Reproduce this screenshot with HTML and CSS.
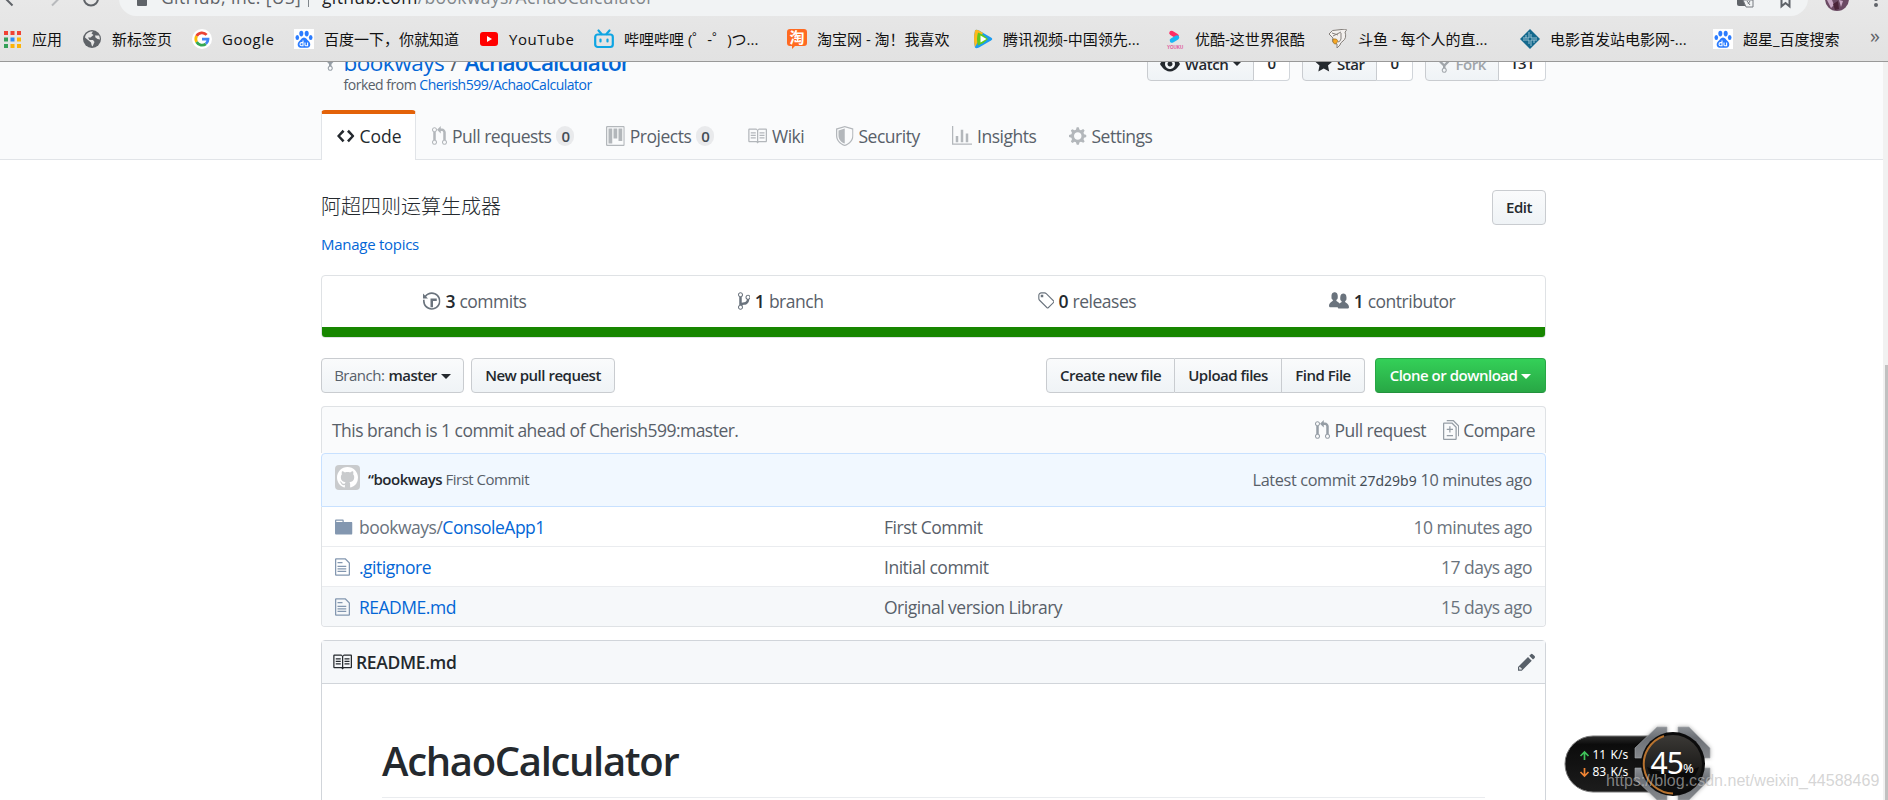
FILE: index.html
```html
<!doctype html>
<html lang="en">
<head>
    <meta charset="UTF-8">
    <title>bookways/AchaoCalculator</title>
    <link rel="stylesheet" href="styles.css">
</head>
<body>
    <!-- icons -->
    <svg class="defs">
        <symbol id="i-code" viewBox="0 0 14 16"><path d="M9.5 3L8 4.5 11.5 8 8 11.5 9.5 13 14 8 9.5 3zm-5 0L0 8l4.5 5L6 11.5 2.5 8 6 4.5 4.5 3z"/></symbol>
        <symbol id="i-pr" viewBox="0 0 12 16"><path d="M11 11.28V5c-.03-.78-.34-1.47-.94-2.06C9.46 2.35 8.78 2.03 8 2H7V0L4 3l3 3V4h1c.27.02.48.11.69.31.21.2.3.42.31.69v6.28A1.993 1.993 0 0 0 10 15a1.993 1.993 0 0 0 1-3.72zm-1 2.92c-.66 0-1.2-.55-1.2-1.2 0-.65.55-1.2 1.2-1.2.65 0 1.2.55 1.2 1.2 0 .65-.55 1.2-1.2 1.2zM4 3c0-1.11-.89-2-2-2a1.993 1.993 0 0 0-1 3.72v6.56A1.993 1.993 0 0 0 2 15a1.993 1.993 0 0 0 1-3.72V4.72c.59-.34 1-.98 1-1.72zm-.8 10c0 .66-.55 1.2-1.2 1.2-.65 0-1.2-.55-1.2-1.2 0-.65.55-1.2 1.2-1.2.65 0 1.2.55 1.2 1.2zM2 4.2C1.34 4.2.8 3.65.8 3c0-.65.55-1.2 1.2-1.2.65 0 1.2.55 1.2 1.2 0 .65-.55 1.2-1.2 1.2z"/></symbol>
        <symbol id="i-project" viewBox="0 0 15 16"><path fill-rule="evenodd" d="M10 12h3V2h-3v10zm-4-2h3V2H6v8zm-4 4h3V2H2v12zm-1 1h13V1H1v14zM14 0H1a1 1 0 0 0-1 1v14a1 1 0 0 0 1 1h13a1 1 0 0 0 1-1V1a1 1 0 0 0-1-1z"/></symbol>
        <symbol id="i-book" viewBox="0 0 16 16"><path d="M3 5h4v1H3V5zm0 3h4V7H3v1zm0 2h4V9H3v1zm11-5h-4v1h4V5zm0 2h-4v1h4V7zm0 2h-4v1h4V9zm2-6v9c0 .55-.45 1-1 1H9.5l-1 1-1-1H2c-.55 0-1-.45-1-1V3c0-.55.45-1 1-1h5.5l1 1 1-1H15c.55 0 1 .45 1 1zm-8 .5L7.5 3H2v9h6V3.5zm7-.5H9.5l-.5.5V12h6V3z"/></symbol>
        <symbol id="i-shield" viewBox="0 0 14 16"><path fill-rule="evenodd" d="M0 2l7-2 7 2v6.02C14 12.69 8.69 16 7 16c-1.69 0-7-3.31-7-7.98V2zm1 .75L7 1l6 1.75v5.268C13 12.104 8.449 15 7 15c-1.449 0-6-2.896-6-6.982V2.75zm1 .75L7 2v12c-1.207 0-5-2.482-5-5.985V3.5z"/></symbol>
        <symbol id="i-graph" viewBox="0 0 16 16"><path d="M16 14v1H0V0h1v14h15zM5 13H3V8h2v5zm4 0H7V3h2v10zm4 0h-2V6h2v7z"/></symbol>
        <symbol id="i-gear" viewBox="0 0 14 16"><path d="M14 8.77v-1.6l-1.94-.64-.45-1.09.88-1.84-1.13-1.13-1.81.91-1.09-.45-.69-1.92h-1.6l-.63 1.94-1.11.45-1.84-.88-1.13 1.13.91 1.81-.45 1.09L0 7.23v1.59l1.94.64.45 1.09-.88 1.84 1.13 1.13 1.81-.91 1.09.45.69 1.92h1.59l.63-1.94 1.11-.45 1.84.88 1.13-1.13-.92-1.81.47-1.09L14 8.75v.02zM7 11c-1.66 0-3-1.34-3-3s1.34-3 3-3 3 1.34 3 3-1.34 3-3 3z"/></symbol>
        <symbol id="i-history" viewBox="0 0 14 16"><path d="M8 13H6V6h5v2H8v5zM7 1C4.81 1 2.87 2.02 1.59 3.59L0 2v4h4L2.5 4.5C3.55 3.17 5.17 2.3 7 2.3c3.14 0 5.7 2.56 5.7 5.7s-2.56 5.7-5.7 5.7A5.71 5.71 0 0 1 1.3 8c0-.34.03-.67.09-1H.08C.03 7.33 0 7.66 0 8c0 3.86 3.14 7 7 7s7-3.14 7-7-3.14-7-7-7z"/></symbol>
        <symbol id="i-branch" viewBox="0 0 10 16"><path d="M10 5c0-1.11-.89-2-2-2a1.993 1.993 0 0 0-1 3.72v.3c-.02.52-.23.98-.63 1.38-.4.4-.86.61-1.38.63-.83.02-1.48.16-2 .45V4.72a1.993 1.993 0 0 0-1-3.72C.88 1 0 1.89 0 3a2 2 0 0 0 1 1.72v6.56c-.59.35-1 .99-1 1.72 0 1.11.89 2 2 2 1.11 0 2-.89 2-2 0-.53-.2-1-.53-1.36.09-.06.48-.41.59-.47.25-.11.56-.17.94-.17 1.05-.05 1.95-.45 2.75-1.25S8.95 7.77 9 6.73h-.02C9.59 6.37 10 5.73 10 5zM2 1.8c.66 0 1.2.55 1.2 1.2 0 .65-.55 1.2-1.2 1.2C1.35 4.2.8 3.65.8 3c0-.65.55-1.2 1.2-1.2zm0 12.41c-.66 0-1.2-.55-1.2-1.2 0-.65.55-1.2 1.2-1.2.65 0 1.2.55 1.2 1.2 0 .65-.55 1.2-1.2 1.2zm6-8c-.66 0-1.2-.55-1.2-1.2 0-.65.55-1.2 1.2-1.2.65 0 1.2.55 1.2 1.2 0 .65-.55 1.2-1.2 1.2z"/></symbol>
        <symbol id="i-tag" viewBox="0 0 14 16"><path d="M7.73 1.73C7.26 1.26 6.62 1 5.96 1H3.5C2.13 1 1 2.13 1 3.5v2.47c0 .66.27 1.3.73 1.77l6.06 6.06c.39.39 1.02.39 1.41 0l4.59-4.59a.996.996 0 0 0 0-1.41L7.73 1.73zM2.38 7.09c-.31-.3-.47-.7-.47-1.13V3.5c0-.88.72-1.59 1.59-1.59h2.47c.42 0 .83.16 1.13.47l6.14 6.13-4.73 4.73-6.13-6.15zM3.01 3h2v2H3V3h.01z"/></symbol>
        <symbol id="i-org" viewBox="0 0 16 16"><path d="M16 12.999c0 .439-.45 1-1 1H7.995c-.539 0-.994-.447-.995-.999H1c-.54 0-1-.561-1-1 0-2.634 3-4 3-4s.229-.409 0-1c-.841-.621-1.058-.59-1-3 .058-2.419 1.367-3 2.5-3s2.442.58 2.5 3c.058 2.41-.159 2.379-1 3-.229.59 0 1 0 1s1.549.711 2.42 2.088C9.196 9.369 10 8.999 10 8.999s.229-.409 0-1c-.841-.62-1.058-.59-1-3 .058-2.419 1.367-3 2.5-3s2.437.581 2.495 3c.059 2.41-.158 2.38-1 3-.229.59 0 1 0 1s3.005 1.366 3.005 4z"/></symbol>
        <symbol id="i-dir" viewBox="0 0 14 16"><path d="M13 4H7V3c0-.66-.31-1-1-1H1c-.55 0-1 .45-1 1v10c0 .55.45 1 1 1h12c.55 0 1-.45 1-1V5c0-.55-.45-1-1-1zM6 4H1V3h5v1z"/></symbol>
        <symbol id="i-file" viewBox="0 0 12 16"><path d="M6 5H2V4h4v1zM2 8h7V7H2v1zm0 2h7V9H2v1zm0 2h7v-1H2v1zm10-7.5V14c0 .55-.45 1-1 1H1c-.55 0-1-.45-1-1V2c0-.55.45-1 1-1h7.5L12 4.5zM11 5L8 2H1v12h10V5z"/></symbol>
        <symbol id="i-diff" viewBox="0 0 13 16"><path d="M6 7h2v1H6v2H5V8H3V7h2V5h1v2zm-3 6h5v-1H3v1zM7.5 2L11 5.5V15c0 .55-.45 1-1 1H1c-.55 0-1-.45-1-1V3c0-.55.45-1 1-1h6.5zM10 6L7 3H1v12h9V6zM8.5 0H3v1h5l4 4v8h1V4.5L8.5 0z"/></symbol>
        <symbol id="i-pencil" viewBox="0 0 14 16"><path d="M0 12v3h3l8-8-3-3-8 8zm3 2H1v-2h1v1h1v1zm10.3-9.3L12 6 9 3l1.3-1.3a.996.996 0 0 1 1.41 0l1.59 1.59c.39.39.39 1.02 0 1.41z"/></symbol>
        <symbol id="i-eye" viewBox="0 0 16 16"><path d="M8.06 2C3 2 0 8 0 8s3 6 8.06 6C13 14 16 8 16 8s-3-6-7.94-6zM8 12c-2.2 0-4-1.78-4-4 0-2.2 1.8-4 4-4 2.22 0 4 1.8 4 4 0 2.22-1.78 4-4 4zm2-4c0 1.11-.89 2-2 2-1.11 0-2-.89-2-2 0-1.11.89-2 2-2 1.11 0 2 .89 2 2z"/></symbol>
        <symbol id="i-star" viewBox="0 0 14 16"><path d="M14 6l-4.9-.64L7 1 4.9 5.36 0 6l3.6 3.26L2.67 14 7 11.67 11.33 14l-.93-4.74L14 6z"/></symbol>
        <symbol id="i-fork" viewBox="0 0 10 16"><path d="M8 1a1.993 1.993 0 0 0-1 3.72V6L5 8 3 6V4.72A1.993 1.993 0 0 0 2 1a1.993 1.993 0 0 0-1 3.72V6.5l3 3v1.78A1.993 1.993 0 0 0 5 15a1.993 1.993 0 0 0 1-3.72V9.5l3-3V4.72A1.993 1.993 0 0 0 8 1zM2 4.2C1.34 4.2.8 3.65.8 3c0-.65.55-1.2 1.2-1.2.65 0 1.2.55 1.2 1.2 0 .65-.55 1.2-1.2 1.2zm3 10c-.66 0-1.2-.55-1.2-1.2 0-.65.55-1.2 1.2-1.2.65 0 1.2.55 1.2 1.2 0 .65-.55 1.2-1.2 1.2zm3-10c-.66 0-1.2-.55-1.2-1.2 0-.65.55-1.2 1.2-1.2.65 0 1.2.55 1.2 1.2 0 .65-.55 1.2-1.2 1.2z"/></symbol>
        <symbol id="i-github" viewBox="0 0 16 16"><path d="M8 0C3.58 0 0 3.58 0 8c0 3.54 2.29 6.53 5.47 7.59.4.07.55-.17.55-.38 0-.19-.01-.82-.01-1.49-2.01.37-2.53-.49-2.69-.94-.09-.23-.48-.94-.82-1.13-.28-.15-.68-.52-.01-.53.63-.01 1.08.58 1.23.82.72 1.21 1.87.87 2.33.66.07-.52.28-.87.51-1.07-1.78-.2-3.64-.89-3.64-3.95 0-.87.31-1.59.82-2.15-.08-.2-.36-1.02.08-2.12 0 0 .67-.21 2.2.82.64-.18 1.32-.27 2-.27.68 0 1.36.09 2 .27 1.53-1.04 2.2-.82 2.2-.82.44 1.1.16 1.92.08 2.12.51.56.82 1.27.82 2.15 0 3.07-1.87 3.75-3.65 3.95.29.25.54.73.54 1.48 0 1.07-.01 1.93-.01 2.2 0 .21.15.46.55.38A8.013 8.013 0 0 0 16 8c0-4.42-3.58-8-8-8z"/></symbol>
        <symbol id="i-baidu" viewBox="0 0 20 20">
            <rect width="20" height="20" fill="#fff"/>
            <g fill="#2b7cff">
                <ellipse cx="7.3" cy="4.6" rx="2" ry="2.8"/>
                <ellipse cx="12.7" cy="4.6" rx="2" ry="2.8"/>
                <ellipse cx="3.3" cy="8.6" rx="1.8" ry="2.5"/>
                <ellipse cx="16.7" cy="8.6" rx="1.8" ry="2.5"/>
                <path d="M10 8.4c2.3 0 3 2.3 4.600 3.700 2.600 2.300 2.200 6.500-1.300 6.700H6.700c-3.500-.2-3.900-4.400-1.300-6.700C7 10.700 7.700 8.400 10 8.400z"/>
            </g>
            <path d="M9 11.500v5.300H7.600a1.500 1.500 0 0 1 0-3.200H9M11 13.500v2.400q0 .9 1 .9h1.600v-3.300" fill="none" stroke="#fff" stroke-width="1.100"/>
        </symbol>
    </svg>

    <div class="browser">
        <div class="toolbar">
            <svg class="nav" width="119" height="16" viewBox="0 0 119 16" fill="none" stroke-width="2">
                <path d="M5-2l7.500 7.500" stroke="#5f6368"/>
                <path d="M59.500-2L52 5.500" stroke="#b8babd"/>
                <circle cx="91" cy="-1.500" r="7" stroke="#5f6368"/>
            </svg>
            <div class="address">
                <i class="lock"></i>
                <span class="corp">GitHub, Inc. [US]</span>
                <i class="bar"></i>
                <span class="url"><b>github.com</b>/bookways/AchaoCalculator</span>
                <svg class="tools" width="70" height="16" viewBox="0 0 70 16">
                    <path d="M0 0h9v6H2q-2 0-2-2z" fill="#5f6368"/>
                    <path d="M6 0h10v7H9z" fill="#f1f3f4" stroke="#777b80"/>
                    <path d="M10 1l3 4M13 1l-2 3" stroke="#777b80"/>
                    <path d="M44.500-2v8.300l4-3.300 4 3.300V-2" fill="none" stroke="#5f6368" stroke-width="2"/>
                </svg>
            </div>
            <svg width="80" height="16" viewBox="0 0 80 16">
                <circle cx="29" cy="-1" r="12" fill="#6b4a63"/>
                <path d="M19 0h5l2 5-3 3zM31 0l4 1-2 6z" fill="#c9a9c4"/>
                <path d="M25 4l5-3 1 8-4 1z" fill="#4a2438"/>
                <g fill="#5f6368"><circle cx="68" cy="-1" r="2"/><circle cx="68" cy="5" r="2"/></g>
            </svg>
        </div>
        <div class="bookmarks">
            <a><svg viewBox="0 0 20 20"><g fill="#f04234"><path d="M2 2h4v4H2zM8.500 2h4v4h-4zM15 2h4v4h-4z"/></g><path d="M2 8.500h4v4H2zM2 15h4v4H2z" fill="#34a058"/><path d="M8.500 8.500h4v4h-4z" fill="#2e8bf5"/><path d="M15 8.500h4v4h-4zM8.500 15h4v4h-4zM15 15h4v4h-4z" fill="#fbb40a"/></svg>应用</a>
            <a><svg viewBox="0 0 20 20"><circle cx="10" cy="10" r="9" fill="#5f6368"/><path d="M11 2.500l-1.500 2 2 1.500-3 2.500H6l1.500 2.500H11l1.500 2-2 4.500c-1-1-1-2-1.500-4L3 8.500c.5-4 4-6.500 8-6zM13 6.500h4.200l.8 4-2.500-.5-2-1.500z" fill="#e6e6e6"/></svg>新标签页</a>
            <a><svg viewBox="0 0 20 20"><circle cx="10" cy="10" r="10" fill="#fff"/><g fill="none" stroke-width="2.800"><path d="M14.600 5.900A6.200 6.200 0 0 0 4.600 7" stroke="#ea4335"/><path d="M4.600 7a6.200 6.200 0 0 0 0 6" stroke="#fbbc05"/><path d="M4.600 13a6.200 6.200 0 0 0 9.300 1.800" stroke="#34a853"/><path d="M13.900 14.800a6 6 0 0 0 2.100-4.600h-6" stroke="#4285f4"/></g></svg><em>Google</em></a>
            <a><svg><use href="#i-baidu"/></svg>百度一下，你就知道</a>
            <a><svg viewBox="0 0 20 20"><rect x="1" y="3" width="18" height="14" rx="3" fill="#f00"/><path d="M8 7l5 3-5 3z" fill="#fff"/></svg><em>YouTube</em></a>
            <a><svg viewBox="0 0 20 20" fill="none" stroke="#0ea5e3" stroke-width="2.200" stroke-linecap="round"><rect x="1.200" y="5.500" width="17.600" height="12.500" rx="2.500"/><path d="M4.500 1.500l3 3.500M15.500 1.500l-3 3.500M6.500 10.500v2M13.500 10.500v2"/></svg>哔哩哔哩 (゜-゜)つ...</a>
            <a><svg viewBox="0 0 20 20"><path d="M3 0h14a3 3 0 0 1 3 3v11a3 3 0 0 1-3 3h-9l-3 3v-3H3a3 3 0 0 1-3-3V3a3 3 0 0 1 3-3z" fill="#ff6a21"/><text class="tao" x="2.500" y="14">淘</text></svg>淘宝网 - 淘！我喜欢</a>
            <a><svg viewBox="0 0 20 20"><path d="M2 1.500Q3 0 6 1.500l12 7q2.500 1.500 0 3l-12 7q-3 1.500-4 0Q0 10 2 1.500z" fill="#1a9cf2"/><path d="M2 1.500Q3 0 6 1.500l4 2.500L2 18Q0 10 2 1.500z" fill="#ffb81c"/><path d="M5 3.500q6 2 10 6.500-4 4.500-10 6.500-2-6 0-13z" fill="#5fc81e"/><path d="M7.500 6.500l6 3.500-6 3.500z" fill="#fff"/></svg>腾讯视频-中国领先...</a>
            <a><svg viewBox="0 0 20 20"><path d="M6.500 4l5 3" stroke="#ff2d64" stroke-width="4.500" stroke-linecap="round"/><path d="M12 8.500l-5 3" stroke="#1ab6f5" stroke-width="4.500" stroke-linecap="round"/><text class="youku" x="2" y="19.500">YOUKU</text></svg>优酷-这世界很酷</a>
            <a><svg viewBox="0 0 20 20"><path d="M1 5q3-5 8-4l9-1q1 2-1 3 2 6-2 9-3 2-3 4l-3 3 0-4q-6-1-4-6z" fill="#f3f0ee" stroke="#85807c"/><path d="M4 4l6 2M5 7l8-4M13 4v6q-1 3-3 3" stroke="#85807c" fill="none"/><path d="M5 10q4-1 5 2l-2 3q-4 0-3-5z" fill="#f5a623" stroke="#8a6a30" stroke-width=".6"/></svg>斗鱼 - 每个人的直...</a>
            <a><svg viewBox="0 0 20 20"><path d="M10 0l10 10-10 10L0 10z" fill="#14698d"/><path d="M9 3v6H3M11 17v-6h6M17 9h-6V5M3 11h6v4M6 6v3M14 11v3" stroke="#a9ccd9" fill="none" stroke-width=".9"/></svg>电影首发站电影网-...</a>
            <a><svg><use href="#i-baidu"/></svg>超星_百度搜索</a>
            <span class="more">»</span>
        </div>
    </div>

    <div class="view">
        <div class="page">
            <div class="pagehead">
                <div class="container">
                    <div class="repohead">
                        <div class="title">
                            <svg class="icon" width="12.500"><use href="#i-fork"/></svg>
                            <div>
                                <h1><a>bookways</a> <i>/</i> <a class="name">AchaoCalculator</a></h1>
                                <p>forked from <a>Cherish599/AchaoCalculator</a></p>
                            </div>
                        </div>
                        <ul class="actions">
                            <li><span class="btn watch"><svg class="icon" width="20"><use href="#i-eye"/></svg>Watch<i class="caret"></i></span><span class="count">0</span></li>
                            <li><span class="btn star"><svg class="icon" width="17.500"><use href="#i-star"/></svg>Star</span><span class="count">0</span></li>
                            <li><span class="btn fork"><svg class="icon" width="12.500"><use href="#i-fork"/></svg>Fork</span><span class="count wide">131</span></li>
                        </ul>
                    </div>
                    <div class="tabs">
                        <a class="on"><svg class="icon" width="17.500"><use href="#i-code"/></svg><span class="code">Code</span></a>
                        <a><svg class="icon" width="15"><use href="#i-pr"/></svg>Pull requests<b>0</b></a>
                        <a><svg class="icon" width="18.750"><use href="#i-project"/></svg>Projects<b>0</b></a>
                        <a><svg class="icon" width="20"><use href="#i-book"/></svg>Wiki</a>
                        <a><svg class="icon" width="17.500"><use href="#i-shield"/></svg>Security</a>
                        <a><svg class="icon" width="20"><use href="#i-graph"/></svg>Insights</a>
                        <a><svg class="icon" width="17.500"><use href="#i-gear"/></svg>Settings</a>
                    </div>
                </div>
            </div>

            <div class="container">
                <div class="about">
                    <div>
                        <p class="desc">阿超四则运算生成器</p>
                        <a class="topics">Manage topics</a>
                    </div>
                    <span class="btn">Edit</span>
                </div>

                <div class="summary">
                    <ul>
                        <li><svg class="icon" width="17.500"><use href="#i-history"/></svg><b>3</b>commits</li>
                        <li><svg class="icon" width="12.500"><use href="#i-branch"/></svg><b>1</b>branch</li>
                        <li><svg class="icon" width="17.500"><use href="#i-tag"/></svg><b>0</b>releases</li>
                        <li><svg class="icon" width="20"><use href="#i-org"/></svg><b>1</b>contributor</li>
                    </ul>
                    <div class="lang"></div>
                </div>

                <div class="filenav">
                    <span class="btn branch"><i>Branch:</i>master<i class="caret"></i></span>
                    <span class="btn newpr">New pull request</span>
                    <div class="group">
                        <span class="btn">Create new file</span>
                        <span class="btn">Upload files</span>
                        <span class="btn">Find File</span>
                    </div>
                    <span class="btn clone">Clone or download<i class="caret"></i></span>
                </div>

                <div class="infobar">
                    <span>This branch is 1 commit ahead of Cherish599:master.</span>
                    <a class="request"><svg class="icon" width="15"><use href="#i-pr"/></svg>Pull request</a>
                    <a><svg class="icon" width="16.250"><use href="#i-diff"/></svg>Compare</a>
                </div>
                <div class="tease">
                    <span class="avatar"><svg width="21" height="21"><use href="#i-github"/></svg></span>
                    <span class="msg"><b>“bookways</b> First Commit</span>
                    <span class="latest">Latest commit <code>27d29b9</code> 10 minutes ago</span>
                </div>
                <div class="files">
                    <div class="row">
                        <svg class="icon" width="17.500"><use href="#i-dir"/></svg>
                        <a><i>bookways/</i>ConsoleApp1</a>
                        <span>First Commit</span>
                        <time>10 minutes ago</time>
                    </div>
                    <div class="row">
                        <svg class="icon" width="15"><use href="#i-file"/></svg>
                        <a>.gitignore</a>
                        <span>Initial commit</span>
                        <time>17 days ago</time>
                    </div>
                    <div class="row hover">
                        <svg class="icon" width="15"><use href="#i-file"/></svg>
                        <a>README.md</a>
                        <span>Original version Library</span>
                        <time>15 days ago</time>
                    </div>
                </div>

                <div class="readme">
                    <h3><svg class="icon" width="20"><use href="#i-book"/></svg>README.md<svg class="icon edit" width="17.500"><use href="#i-pencil"/></svg></h3>
                    <h2>AchaoCalculator</h2>
                </div>
            </div>
        </div>
        <div class="scroll"><div class="thumb"></div></div>
    </div>

    <!-- net speed ball -->
    <svg class="speed" width="180" height="85" viewBox="0 0 180 85">
        <defs>
            <linearGradient id="pill" x2="0" y2="1"><stop offset="0" stop-color="#2c2c2c"/><stop offset=".15" stop-color="#0c0c0c"/><stop offset="1" stop-color="#1c1c1c"/></linearGradient>
            <linearGradient id="ring" x2="0" y2="1"><stop offset="0" stop-color="#8c9095"/><stop offset=".35" stop-color="#6c7076"/><stop offset="1" stop-color="#85888c"/></linearGradient>
            <linearGradient id="ball" x2="0" y2="1"><stop offset="0" stop-color="#3b3936"/><stop offset=".6" stop-color="#1c1b19"/><stop offset="1" stop-color="#0c0c0c"/></linearGradient>
        </defs>
        <path d="M38 21h80v56H38a28 28 0 0 1 0-56z" fill="url(#pill)" stroke="#777" stroke-width="1"/>
        <g class="frame" fill="url(#ring)" stroke="#a9acb0" stroke-width=".6">
            <path d="M80 43V33l22-21h10v15L92 43z"/>
            <path d="M155 43V33l-21-21h-11v15l21 16z"/>
            <path d="M80 53v11l22 21h10V70L92 53z"/>
            <path d="M155 53v11l-21 21h-11V70l21-17z"/>
        </g>
        <circle cx="118" cy="49" r="32" fill="#0b0b0b"/>
        <circle cx="118" cy="49" r="29" fill="url(#ball)"/>
        <path d="M92 52q26 12 52 0a27 27 0 0 1-52 0z" fill="#0a0a0a"/>
        <path d="M109 21a29.500 29.500 0 0 0 9 57.500" fill="none" stroke="#b8732f" stroke-width="2"/>
        <g fill="none" stroke-width="1.700">
            <path d="M29.500 45V37M25.500 41l4-4 4 4" stroke="#3fc35a"/>
            <path d="M29.500 53v8M25.500 57l4 4 4-4" stroke="#f08433"/>
        </g>
        <g fill="#fff">
            <text class="kb" x="37.500" y="44">11</text><text class="kb" x="55.500" y="44">K/s</text>
            <text class="kb" x="37.500" y="61">83</text><text class="kb" x="55.500" y="61">K/s</text>
            <text class="num" x="95.500" y="59">45</text><text class="pct" x="128" y="58">%</text>
        </g>
    </svg>
    <div class="mark">https://blog.csdn.net/weixin_44588469</div>
</body>
</html>
```
FILE: styles.css
```css
*{
    margin:0;
    padding:0;
    box-sizing: border-box;
}
body{
    width:1888px;
    height:800px;
    overflow:hidden;
    background:#fff;
    color:#24292e;
    font:17.5px/26px "Open Sans","Noto Sans CJK SC",sans-serif;
    letter-spacing: -0.028em;
    position:relative;
}
ul{
    list-style: none;
}
i,em{
    font-style: normal;
}
a{
    color:#0366d6;
}
.defs{
    display:none;
}
.icon{
    height:20px;
    flex:none;
    fill:currentColor;
}

/* browser */
.browser{
    height:62px;
    background:linear-gradient(#e8e8e8,#e2e2e2);
    border-bottom:1px solid #999;
    overflow:hidden;
}
.toolbar{
    height:16px;
    display:flex;
    align-items: flex-end;
}
.address{
    flex:1;
    height:35px;
    padding:0 0 3px 18px;
    display:flex;
    align-items: center;
    border-radius: 18px;
    background:#f1f3f4;
    color:#5f6368;
    letter-spacing: 0.021em;
}
.lock{
    width:10px;
    height:13px;
    margin:5px 14px 0 0;
    background:#5f6368;
    border-radius: 1px;
}
.corp{
    width:147px;
}
.bar{
    width:1px;
    height:20px;
    margin-right:13px;
    background:#80868b;
}
.url{
    color:#80868b;
}
.url b{
    font-weight: 400;
    color:#202124;
}
.tools{
    align-self: flex-end;
    margin:0 1px -3px auto;
}
.bookmarks{
    height:45px;
    padding:1px 0 0 2px;
    display:grid;
    grid-template-columns: 80px 110px 102px 185px 115px 193px 186px 192px 163px 192px 193px 157px 1fr;
    align-items: center;
    font:15px/22px "Open Sans","Noto Sans CJK SC",sans-serif;
    letter-spacing: 0;
}
.bookmarks a{
    display:flex;
    align-items: center;
    gap:10px;
    white-space: nowrap;
    color:#111;
}
.bookmarks svg{
    width:20px;
    height:20px;
    flex:none;
}
.bookmarks em{
    letter-spacing: 0.035em;
}
.tao{
    font:bold 15px "Noto Sans CJK SC",sans-serif;
    fill:#fff;
}
.youku{
    font:bold 4.5px "Liberation Sans",sans-serif;
    fill:#e0569a;
}
.more{
    font-size:20px;
    color:#5f6368;
    margin-top:-6px;
}

/* page */
.view{
    display:flex;
    height:738px;
}
.page{
    flex:1;
    overflow:hidden;
}
.scroll{
    width:5px;
    padding:303px 0 0 2px;
    background:#f1f1f1;
}
.thumb{
    height:435px;
    background:#c1c1c1;
}
.container{
    width:1225px;
    margin-left:321px;
}
.pagehead{
    height:98px;
    background:#fafbfc;
    border-bottom:1px solid #e1e4e8;
}
.repohead{
    height:48px;
    display:flex;
    justify-content: space-between;
}
.title{
    display:flex;
    gap:7px;
    padding-left:3px;
    margin-top:-14px;
}
.title .icon{
    margin-top:4px;
    color:#959da5;
}
.title h1{
    font-size:22.5px;
    line-height:30px;
    font-weight: 400;
}
.title h1 i{
    color:#586069;
    margin:0 1px;
}
.title .name{
    font-weight: 600;
    letter-spacing: -0.038em;
}
.title p{
    font-size:14px;
    line-height:14px;
    color:#586069;
}
.actions{
    display:flex;
    gap:12px;
    margin-top:-16px;
}
.actions li{
    display:flex;
    height:35px;
}
.actions .btn{
    gap:5px;
    padding:0;
    border-radius: 4px 0 0 4px;
}
.watch{
    width:107px;
}
.star{
    width:75px;
}
.fork{
    width:74px;
}
.actions .fork{
    color:#a0a5aa;
}
.count{
    width:36px;
    border:1px solid #d1d5da;
    border-left:0;
    border-radius: 0 4px 4px 0;
    background:#fff;
    font-size:15px;
    font-weight: 600;
    line-height:32px;
    text-align: center;
}
.wide{
    width:47px;
}
.tabs{
    display:grid;
    grid-template-columns: 95px 174px 141px 89px 116px 117px 120px;
    height:50px;
}
.tabs a{
    display:flex;
    align-items: center;
    gap:5px;
    padding:1px 0 0 16px;
    color:#586069;
    white-space: nowrap;
}
.tabs .icon{
    color:#b3b7bb;
}
.tabs .on{
    padding:0 0 0 15px;
    border:1px solid #e1e4e8;
    border-top:4px solid #e36209;
    border-bottom:0;
    border-radius: 4px 4px 0 0;
    background:#fff;
    color:#24292e;
}
.tabs .on .icon{
    color:#24292e;
    margin-top:-3px;
}
.code{
    letter-spacing: 0;
    margin-top:-3px;
}
.tabs b{
    width:18px;
    height:20px;
    border-radius: 10px;
    background:#e9eaec;
    color:#444d56;
    font-size:15px;
    line-height:20px;
    font-weight: 600;
    text-align: center;
}
.btn{
    display:flex;
    align-items: center;
    justify-content: center;
    height:35px;
    padding-bottom:2px;
    border:1px solid #c9ccd0;
    border-radius: 4px;
    background:linear-gradient(#fafbfc,#eff3f6);
    color:#24292e;
    font-size:15px;
    font-weight: 600;
    white-space: nowrap;
}
.caret{
    margin-top:3px;
    border:5px solid transparent;
    border-top-color:currentColor;
    border-bottom:0;
}
.watch .caret{
    margin-top:0;
    border-width:4px;
    border-bottom:0;
}
.about{
    display:flex;
    justify-content: space-between;
    height:115px;
    padding-top:30px;
}
.about .btn{
    width:54px;
}
.desc{
    padding-top:2px;
    font-size:20px;
    line-height:30px;
    font-weight: 300;
    letter-spacing: 0;
}
.topics{
    display:block;
    margin-top:9px;
    font-size:15px;
    letter-spacing: -0.018em;
}
.summary{
    height:63px;
    border:1px solid #dfe2e5;
    border-radius: 4px;
    overflow:hidden;
}
.summary ul{
    display:flex;
    height:51px;
    padding-bottom:1px;
}
.summary li{
    flex:1;
    display:flex;
    align-items: center;
    justify-content: center;
    gap:4.5px;
    color:#586069;
}
.summary .icon{
    color:#6a737d;
}
.summary b{
    font-weight: 600;
    color:#24292e;
}
.lang{
    height:10px;
    background:#178600;
}
.filenav{
    display:flex;
    margin:20px 0 13px;
}
.branch{
    width:143px;
    gap:4px;
}
.branch i:first-child{
    font-weight: 400;
    color:#586069;
}
.newpr{
    width:144px;
    margin-left:7px;
}
.group{
    display:flex;
    margin:0 10px 0 auto;
}
.group .btn{
    width:129px;
    border-radius: 4px 0 0 4px;
}
.group .btn+.btn{
    width:107px;
    border-left:0;
    border-radius: 0;
}
.group .btn:last-child{
    width:83px;
    border-radius: 0 4px 4px 0;
}
.clone{
    width:171px;
    gap:4px;
    border-color:#28a745;
    border-bottom-color:#23923d;
    background:linear-gradient(#34d058,#28a745);
    color:#fff;
}
.infobar{
    display:flex;
    align-items: center;
    height:47px;
    padding:0 10px;
    border:1px solid #dfe2e5;
    border-bottom:0;
    border-radius: 4px 4px 0 0;
    background:#fafbfc;
    color:#586069;
}
.infobar span{
    letter-spacing: -0.03em;
}
.infobar a{
    display:flex;
    align-items: center;
    gap:4px;
    margin-left:17px;
    color:#586069;
}
.infobar .request{
    margin-left:auto;
}
.infobar .icon{
    color:#959da5;
}
.tease{
    display:flex;
    height:54px;
    padding:11px 13px 0;
    border:1px solid #c8e1ff;
    border-radius: 4px 4px 0 0;
    background:#f1f8ff;
    color:#586069;
    font-size:15px;
    line-height:29px;
}
.avatar{
    width:25px;
    height:25px;
    padding:2px;
    border-radius: 4px;
    background:#c9cbcd;
    fill:#fff;
}
.avatar svg{
    display:block;
}
.msg{
    margin-left:8px;
}
.msg b{
    font-weight: 600;
    color:#24292e;
}
.latest{
    margin-left:auto;
    font-size:16.25px;
    line-height:30px;
    letter-spacing: -0.022em;
}
.latest code{
    font:14px "Noto Sans",sans-serif;
    letter-spacing: 0;
    color:#444d56;
}
.files{
    border:1px solid #dfe2e5;
    border-top:0;
    border-radius: 0 0 4px 4px;
    overflow:hidden;
}
.row{
    display:grid;
    grid-template-columns: 24px 525px 1fr auto;
    align-items: center;
    height:40px;
    padding:0 13px;
    border-bottom:1px solid #eaecef;
    color:#586069;
}
.row:last-child{
    height:39px;
    border-bottom:0;
}
.row .icon{
    color:#8397b0;
}
.row i,.row time{
    color:#6a737d;
}
.hover{
    background:#f6f8fa;
}
.readme{
    height:190px;
    margin-top:13px;
    border:1px solid #d1d5da;
    border-radius: 4px 4px 0 0;
}
.readme h3{
    display:flex;
    align-items: center;
    gap:4px;
    height:43px;
    padding:0 10px;
    border-bottom:1px solid #d1d5da;
    background:#f6f8fa;
    font-size:17.5px;
    font-weight: 600;
    letter-spacing: -0.02em;
}
.readme .edit{
    margin-left:auto;
    color:#586069;
}
.readme h2{
    height:114px;
    margin:0 60px;
    padding-top:52px;
    border-bottom:1px solid #eaecef;
    font-size:40px;
    line-height:50px;
    font-weight: 600;
    letter-spacing: -0.033em;
}

/* things that float over the page */
.speed{
    position:absolute;
    left:1555px;
    top:715px;
}
.frame{
    filter:drop-shadow(0 0 2px rgba(0,0,0,.3));
}
.kb{
    font:12px "Noto Sans",sans-serif;
    letter-spacing: 0;
}
.num{
    font:30px "Noto Sans",sans-serif;
    letter-spacing: -1px;
}
.pct{
    font:13px "Noto Sans",sans-serif;
    letter-spacing: -1px;
}
.mark{
    position:absolute;
    left:1606px;
    top:769px;
    font:16px/24px "Liberation Sans",sans-serif;
    letter-spacing: 0.03px;
    color:rgba(190,190,190,.65);
}
```
